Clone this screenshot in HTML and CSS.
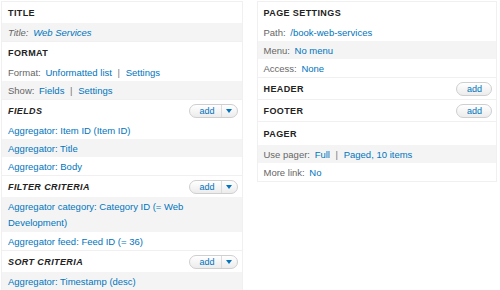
FILE: index.html
```html
<!DOCTYPE html>
<html lang="en">
<head>
    <meta charset="UTF-8">
    <title>Views - Edit</title>
    <link rel="stylesheet" href="styles.css">
</head>
<body>

<div class="views">
  <!-- Colonne gauche -->
  <div class="col col-left">
    <div class="section first">
      <div class="head"><h3>Title</h3></div>
      <div class="row even italic"><span class="lbl">Title:</span> <a href="#">Web Services</a></div>
    </div>

    <div class="section">
      <div class="head"><h3>Format</h3></div>
      <div class="row"><span class="lbl">Format:</span> <a href="#">Unformatted list</a> <span class="sep">|</span> <a href="#">Settings</a></div>
      <div class="row even"><span class="lbl">Show:</span> <a href="#">Fields</a> <span class="sep">|</span> <a href="#">Settings</a></div>
    </div>

    <div class="section">
      <div class="head"><h3 class="it">Fields</h3>
        <span class="add-btn drop"><span class="add">add</span><span class="arrow"></span></span>
      </div>
      <div class="row"><a href="#">Aggregator: Item ID (Item ID)</a></div>
      <div class="row even"><a href="#">Aggregator: Title</a></div>
      <div class="row"><a href="#">Aggregator: Body</a></div>
    </div>

    <div class="section">
      <div class="head"><h3 class="it">Filter criteria</h3>
        <span class="add-btn drop"><span class="add">add</span><span class="arrow"></span></span>
      </div>
      <div class="row even tall"><a href="#">Aggregator category: Category ID (= Web Development)</a></div>
      <div class="row"><a href="#">Aggregator feed: Feed ID (= 36)</a></div>
    </div>

    <div class="section">
      <div class="head"><h3 class="it">Sort criteria</h3>
        <span class="add-btn drop"><span class="add">add</span><span class="arrow"></span></span>
      </div>
      <div class="row even"><a href="#">Aggregator: Timestamp (desc)</a></div>
    </div>
  </div>

  <!-- Colonne droite -->
  <div class="col col-right">
    <div class="section first">
      <div class="head"><h3>Page settings</h3></div>
      <div class="row"><span class="lbl">Path:</span> <a href="#">/book-web-services</a></div>
      <div class="row even"><span class="lbl">Menu:</span> <a href="#">No menu</a></div>
      <div class="row"><span class="lbl">Access:</span> <a href="#">None</a></div>
    </div>

    <div class="section">
      <div class="head"><h3>Header</h3>
        <span class="add-btn"><span class="add">add</span></span>
      </div>
    </div>

    <div class="section">
      <div class="head"><h3>Footer</h3>
        <span class="add-btn"><span class="add">add</span></span>
      </div>
    </div>

    <div class="section">
      <div class="head pager"><h3>Pager</h3></div>
      <div class="row even"><span class="lbl">Use pager:</span> <a href="#">Full</a> <span class="sep">|</span> <a href="#">Paged, 10 items</a></div>
      <div class="row"><span class="lbl">More link:</span> <a href="#">No</a></div>
    </div>
  </div>
</div>

</body>
</html>
```

FILE: styles.css
```css
body {
    margin: 0;
    background: #fff;
    font-family: 'Liberation Sans', Arial, sans-serif;
    font-size: 9.5px;
    color: #666;
}
.views {
    display: flex;
    align-items: flex-start;
    gap: 14px;
    padding: 1px 3px 0 1px;
}
.col {
    border: 1px solid #f0f0f0;
}
.col-left {
    width: 240px;
    border-bottom: none;
}
.col-right {
    width: 239px;
}
.section {
    border-top: 1px solid #f0f0f0;
}
.section.first {
    border-top: none;
}
.head {
    display: flex;
    align-items: center;
    justify-content: space-between;
    height: 21px;
    padding: 0 4px 0 6px;
}
.head.pager {
    height: 23px;
}
h3 {
    margin: 0;
    font-size: 9px;
    font-weight: bold;
    letter-spacing: 0.4px;
    text-transform: uppercase;
    color: #222;
}
h3.it {
    font-style: italic;
}
.row {
    padding: 1px 6px 0 6px;
    line-height: 17px;
    background: #fff;
}
.row.even {
    background: #f4f4f4;
}
.row.tall {
    line-height: 16px;
    padding: 1.5px 6px 1.5px 6px;
}
.row.italic {
    font-style: italic;
}
.lbl {
    color: #666;
    margin-right: 2px;
}
.sep {
    color: #777;
    margin: 0 3px;
}
a {
    color: #0074bd;
    text-decoration: none;
}
/* Bouton add */
.add-btn {
    display: flex;
    align-items: center;
    height: 12px;
    border: 1px solid #cfcfcf;
    border-radius: 8px;
    background: linear-gradient(#ffffff, #ececec);
    font-size: 9px;
    color: #0074bd;
}
.add-btn .add {
    padding: 0 9px 0 10px;
    line-height: 12px;
}
.add-btn.drop .add {
    padding: 0 6px 0 9px;
    border-right: 1px solid #dcdcdc;
}
.add-btn .arrow {
    width: 0;
    height: 0;
    margin: 0 5px 0 4px;
    border-left: 3px solid transparent;
    border-right: 3px solid transparent;
    border-top: 4px solid #0074bd;
}
```
